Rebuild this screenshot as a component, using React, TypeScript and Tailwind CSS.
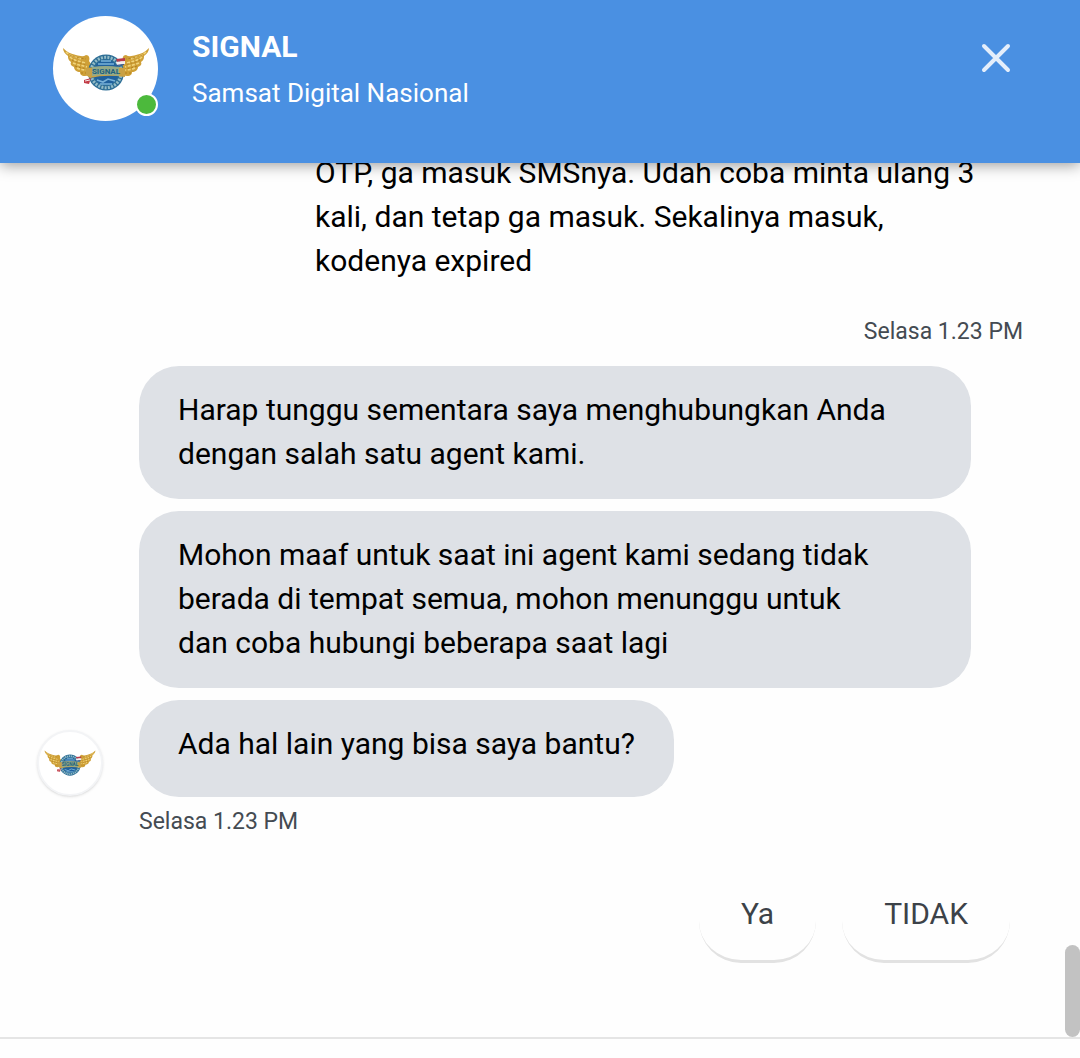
type Bubble = {
  id: number;
  lines: string[];
};

const userLines = [
  "OTP, ga masuk SMSnya. Udah coba minta ulang 3",
  "kali, dan tetap ga masuk. Sekalinya masuk,",
  "kodenya expired",
];

const bubbles: Bubble[] = [
  {
    id: 1,
    lines: ["Harap tunggu sementara saya menghubungkan Anda", "dengan salah satu agent kami."],
  },
  {
    id: 2,
    lines: [
      "Mohon maaf untuk saat ini agent kami sedang tidak",
      "berada di tempat semua, mohon menunggu untuk",
      "dan coba hubungi beberapa saat lagi",
    ],
  },
];

const replies = ["Ya", "TIDAK"];

function Wing() {
  return (
    <>
      <path
        d="M1 1C5 5 9 7 14 8C18 9 21 10 24 8C27 8 28 11 27 14L31 20L29 28L23 29C19 29 18 27 18 25C15 25 12 23 12 20C9 19 8 17 9 15C6 13 6 11 6 9C3 7 1 4 1 1Z"
        fill="#cfa037"
      />
      <path
        d="M4 5C8 9 14 10 19 12M8 10C12 14 17 14 23 16M11 16C15 18 19 18 25 20M15 21C19 23 23 23 27 23"
        fill="none"
        stroke="#f0d47c"
        strokeWidth="1.6"
        strokeDasharray="3 1.5"
      />
      <path
        d="M8 8C13 11 19 11 24 12M10 13C15 16 20 16 25 18M13 19C18 21 21 21 26 22M19 26L27 26"
        fill="none"
        stroke="#ae7e20"
        strokeWidth="0.9"
        strokeDasharray="2 2"
      />
    </>
  );
}

function Logo({ className }: { className: string }) {
  return (
    <svg viewBox="0 0 88 44" className={className} aria-hidden="true">
      <Wing />
      <g transform="translate(88 0) scale(-1 1)">
        <Wing />
      </g>
      {/* seal */}
      <circle cx="44" cy="25.5" r="18" fill="#2d6e96" />
      <circle cx="44" cy="25.5" r="15.2" fill="none" stroke="#94bcc6" strokeWidth="3" strokeDasharray="2 1.3" />
      <circle cx="44" cy="25.5" r="12.5" fill="#1f609d" />
      <path d="M36 17H52M39 14H49M35 33L41 35L46 32L53 34M38 37H50" stroke="#79b2d8" strokeWidth="1.6" fill="none" />
      {/* flag and ribbon */}
      <path d="M54 12L63 11V14L55 15Z" fill="#b83a4b" />
      <path d="M54 15L63 14V17L55 18Z" fill="#f2eff0" />
      <path d="M54 18L62 17V18L55 19Z" fill="#35508f" />
      <path d="M22 33L29 31L27 37L22 36Z" fill="#c23b46" />
      <path d="M23 34L28 33" stroke="#f5e9e9" strokeWidth="1" />
      <path d="M24 21Q44 18 63 21V30Q44 27 28 31L24 28Z" fill="#c9a145" />
      <path d="M30 20Q44 18 57 20V29Q44 27 30 29Z" fill="#93a988" />
      <text
        x="44"
        y="27"
        textAnchor="middle"
        fontFamily="Roboto, sans-serif"
        fontSize="8"
        fontWeight="700"
        fill="#22617d"
      >
        SIGNAL
      </text>
    </svg>
  );
}

function Lines({ lines }: { lines: string[] }) {
  return (
    <p className="text-[30px] leading-[44px] whitespace-pre-line">{lines.join("\n")}</p>
  );
}

export default function App() {
  return (
    <main className="flex min-h-screen flex-col bg-[#fefefe] font-[Roboto,sans-serif] text-black">
      <header className="relative z-10 flex h-[163px] items-start gap-[34px] bg-[#4a90e2] pt-4 pr-[65px] pl-[53px] text-white shadow-[0_2px_14px_rgba(0,0,0,0.4)]">
        <div className="relative flex size-[105px] shrink-0 items-center justify-center rounded-full bg-white">
          <Logo className="w-[88px]" />
          <span className="absolute right-0 bottom-[5px] size-[23px] rounded-full border-2 border-white bg-[#4cb93c]" />
        </div>
        <div className="flex-1 pt-2">
          <h1 className="text-[30px] leading-[46px] font-bold">SIGNAL</h1>
          <p className="text-[26px] leading-[46px]">Samsat Digital Nasional</p>
        </div>
        <button aria-label="Tutup" className="mt-[23px] p-1 text-[#e4eefb]">
          <svg viewBox="0 0 30 30" className="size-[30px]" fill="none" stroke="currentColor" strokeWidth="4" strokeLinecap="round">
            <path d="M3 3L27 27M27 3L3 27" />
          </svg>
        </button>
      </header>

      <section className="relative flex-1">
        {/* User message, scrolled under the header */}
        <div className="-mt-3 pr-[57px] pl-[315px]">
          <Lines lines={userLines} />
          <time className="mt-[33px] block text-right text-[23px] leading-8 text-[#444b52]">Selasa 1.23 PM</time>
        </div>

        {/* Bot messages */}
        <div className="mt-[18px] flex items-end gap-9 pr-[109px] pl-[37px]">
          <div className="mb-px flex size-[66px] shrink-0 items-center justify-center rounded-full border-2 border-gray-100 bg-white shadow-sm">
            <Logo className="w-[52px]" />
          </div>
          <div className="flex flex-1 flex-col items-start gap-3">
            {bubbles.map((b) => (
              <div key={b.id} className="w-full rounded-[40px] bg-[#dee1e6] px-[39px] pt-[22px] pb-[23px]">
                <Lines lines={b.lines} />
              </div>
            ))}
            <div className="rounded-[40px] bg-[#dee1e6] px-[39px] pt-[22px] pb-[31px]">
              <Lines lines={["Ada hal lain yang bisa saya bantu?"]} />
            </div>
          </div>
        </div>
        <time className="mt-[9px] block pl-[139px] text-[23px] leading-8 text-[#444b52]">Selasa 1.23 PM</time>

        {/* Quick replies */}
        <div className="mt-[30px] flex justify-end gap-[26px] pr-[70px] pb-8">
          {replies.map((r) => (
            <button
              key={r}
              className="rounded-[42px] border-b-[3px] border-[#e2e2e2] px-[42px] pt-6 pb-6 text-[30px] leading-[44px] text-[#3c4248]"
            >
              {r}
            </button>
          ))}
        </div>

        <div className="absolute right-0 bottom-0 h-[92px] w-[15px] rounded-full bg-[#c2c2c2]" />
      </section>

      <footer className="h-[21px] border-t-2 border-[#e5e5e5]" />
    </main>
  );
}
